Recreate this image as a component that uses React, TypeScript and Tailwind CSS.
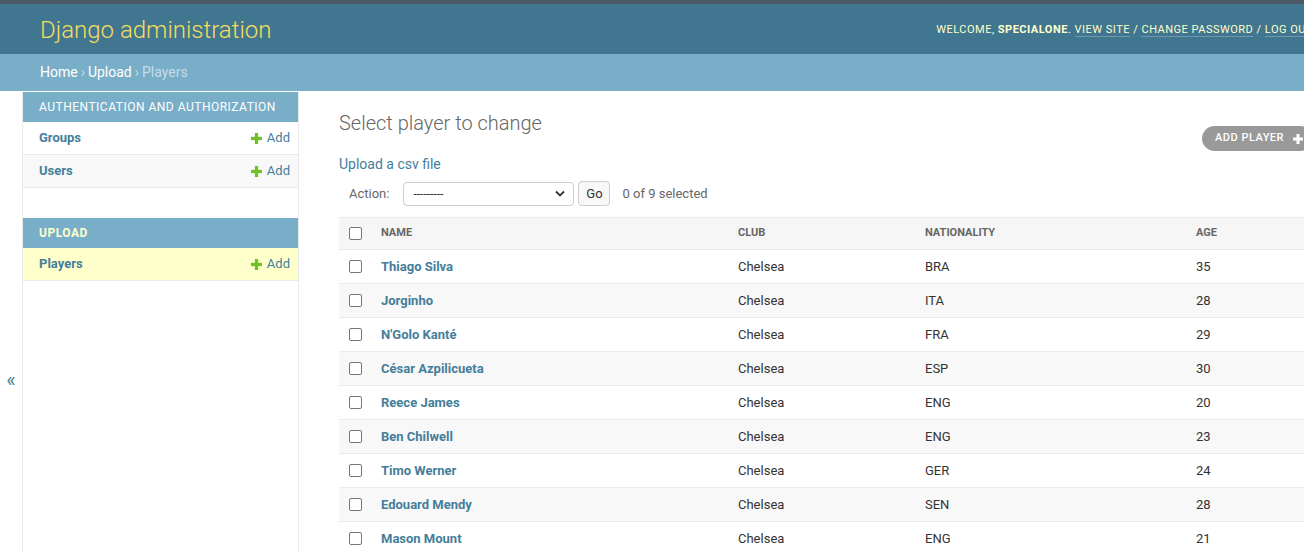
import React from 'react';

const players = [
  { name: 'Thiago Silva', club: 'Chelsea', nat: 'BRA', age: 35 },
  { name: 'Jorginho', club: 'Chelsea', nat: 'ITA', age: 28 },
  { name: "N'Golo Kanté", club: 'Chelsea', nat: 'FRA', age: 29 },
  { name: 'César Azpilicueta', club: 'Chelsea', nat: 'ESP', age: 30 },
  { name: 'Reece James', club: 'Chelsea', nat: 'ENG', age: 20 },
  { name: 'Ben Chilwell', club: 'Chelsea', nat: 'ENG', age: 23 },
  { name: 'Timo Werner', club: 'Chelsea', nat: 'GER', age: 24 },
  { name: 'Edouard Mendy', club: 'Chelsea', nat: 'SEN', age: 28 },
  { name: 'Mason Mount', club: 'Chelsea', nat: 'ENG', age: 21 },
];

const PlusIcon = ({ color = '#70bf2b', size = 10 }: { color?: string; size?: number }) => (
  <svg width={size} height={size} viewBox="0 0 10 10">
    <rect x="3.5" y="0" width="3" height="10" fill={color} />
    <rect x="0" y="3.5" width="10" height="3" fill={color} />
  </svg>
);

const Checkbox = () => (
  <span className="block w-[13px] h-[13px] border border-[#767676] rounded-[2px] bg-white" />
);

const SidebarRow = ({ label, alt, current }: { label: string; alt?: boolean; current?: boolean }) => (
  <div
    className={`h-[33px] flex items-center justify-between pl-4 pr-2 border-b border-[#eaeaea] text-[13px] ${
      current ? 'bg-[#ffffcc]' : alt ? 'bg-[#f8f8f8]' : 'bg-white'
    }`}
  >
    <span className="font-bold text-[#447e9b]">{label}</span>
    <span className="flex items-center gap-[5px] text-[#447e9b]">
      <PlusIcon size={11} />
      Add
    </span>
  </div>
);

export default function App() {
  return (
    <div className="w-[1304px] h-[552px] overflow-hidden bg-white font-['Roboto','Liberation_Sans',sans-serif]">
      <div className="w-[1353px]">
        <div className="h-1 bg-[#4b5a64]" />

        {/* header */}
        <header className="h-[50px] bg-[#417690] flex items-center pl-10 pr-10">
          <h1 className="text-[24px] font-light text-[#f5dd5d] leading-none mt-[2px]">Django administration</h1>
          <div className="ml-auto mt-[2px] text-[11px] uppercase tracking-[0.5px] text-[#ffffcc]">
            Welcome, <strong className="font-bold">specialone</strong>.{' '}
            <a className="border-b border-white/25">View site</a> /{' '}
            <a className="border-b border-white/25">Change password</a> /{' '}
            <a className="border-b border-white/25">Log out</a>
          </div>
        </header>

        {/* breadcrumbs */}
        <div className="h-[37px] bg-[#79aec8] flex items-center pl-10 text-[14px] text-white">
          <span>Home</span>
          <span className="mx-[3px] text-[#c4dce8]">›</span>
          <span>Upload</span>
          <span className="mx-[3px] text-[#c4dce8]">›</span>
          <span className="text-[#c4dce8]">Players</span>
        </div>

        <div className="flex pt-px h-[470px]">
          {/* toggle */}
          <div className="w-[22px] flex justify-center pt-[276px]">
            <span className="text-[20px] leading-6 text-[#447e9b]">«</span>
          </div>

          {/* sidebar */}
          <nav className="w-[277px] border-x border-[#eaeaea]">
            <div className="h-[30px] bg-[#79aec8] flex items-center pl-4 text-[12px] tracking-[0.5px] text-white uppercase">
              Authentication and Authorization
            </div>
            <SidebarRow label="Groups" />
            <SidebarRow label="Users" alt />
            <div className="h-[30px]" />
            <div className="h-[30px] bg-[#79aec8] flex items-center pl-4 text-[12px] tracking-[0.5px] text-[#ffffcc] font-bold uppercase">
              Upload
            </div>
            <SidebarRow label="Players" current />
          </nav>

          {/* content */}
          <main className="flex-1 pl-10 pr-10 pt-5">
            <div className="flex h-6 items-start justify-between">
              <h2 className="text-[20px] font-light text-[#666] leading-6 -mt-px">Select player to change</h2>
              <span className="mt-[14px] h-[25px] shrink-0 rounded-full bg-[#999] flex items-center gap-[9px] pl-[13px] pr-[10px] text-[11px] font-medium tracking-[0.5px] text-white uppercase">
                Add player
                <PlusIcon color="#ffffff" size={10} />
              </span>
            </div>

            <div className="mt-[18px] text-[14px] leading-5 text-[#447e9b]">Upload a csv file</div>

            <div className="mt-[7px] h-[25px] flex items-center pl-[10px] text-[13px] text-[#666]">
              <span>Action:</span>
              <div className="ml-[14px] w-[171px] h-[24px] border border-[#ccc] rounded-[4px] flex items-center justify-between pl-[9px] pr-2 text-[#333]">
                <span className="text-[12px]">---------</span>
                <svg width="10" height="7" viewBox="0 0 10 7">
                  <path d="M1 1.5 L5 5.5 L9 1.5" stroke="#333" strokeWidth="1.8" fill="none" />
                </svg>
              </div>
              <div className="ml-1 w-[32px] h-[25px] border border-[#ccc] rounded-[4px] bg-[#f8f8f8] flex items-center justify-center text-[#333]">
                Go
              </div>
              <span className="ml-3">0 of 9 selected</span>
            </div>

            {/* table */}
            <div className="mt-[11px] text-[13px]">
              <div className="grid grid-cols-[32px_357px_187px_271px_1fr] h-[33px] items-center bg-[#f6f6f6] border-y border-[#eaeaea] text-[11px] font-bold text-[#666] uppercase">
                <div className="pl-[10px]">
                  <Checkbox />
                </div>
                <div className="pl-[10px]">Name</div>
                <div className="pl-[10px]">Club</div>
                <div className="pl-[10px]">Nationality</div>
                <div className="pl-[10px]">Age</div>
              </div>
              {players.map((p, i) => (
                <div
                  key={p.name}
                  className={`grid grid-cols-[32px_357px_187px_271px_1fr] h-[34px] items-center border-b border-[#eaeaea] ${
                    i % 2 === 1 ? 'bg-[#f8f8f8]' : 'bg-white'
                  }`}
                >
                  <div className="pl-[10px]">
                    <Checkbox />
                  </div>
                  <div className="pl-[10px] font-bold text-[#447e9b]">{p.name}</div>
                  <div className="pl-[10px] text-[#333]">{p.club}</div>
                  <div className="pl-[10px] text-[#333]">{p.nat}</div>
                  <div className="pl-[10px] text-[#333]">{p.age}</div>
                </div>
              ))}
            </div>
          </main>
        </div>
      </div>
    </div>
  );
}
